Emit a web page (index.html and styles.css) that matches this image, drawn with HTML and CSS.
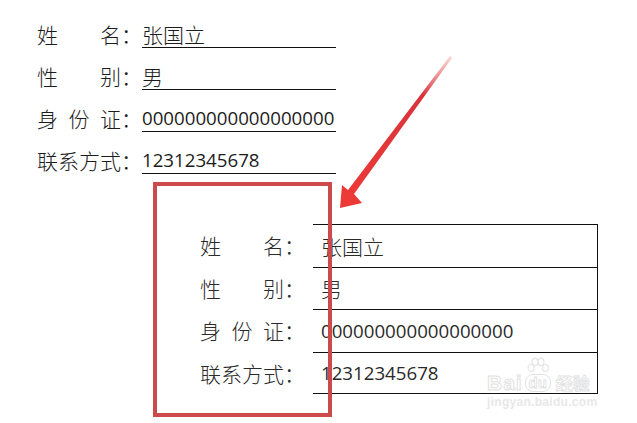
FILE: index.html
```html
<!DOCTYPE html>
<html lang="zh-CN">
<head>
<meta charset="utf-8">
<title>表单</title>
<link rel="stylesheet" href="styles.css">
</head>
<body>
<div class="page">
  <section class="form">
    <div class="row">
      <div class="label"><span class="chars"><span>姓</span><span>名</span></span><span class="colon">：</span></div>
      <div class="value cjk">张国立</div>
    </div>
    <div class="row">
      <div class="label"><span class="chars"><span>性</span><span>别</span></span><span class="colon">：</span></div>
      <div class="value cjk">男</div>
    </div>
    <div class="row">
      <div class="label"><span class="chars"><span>身</span><span>份</span><span>证</span></span><span class="colon">：</span></div>
      <div class="value num">000000000000000000</div>
    </div>
    <div class="row">
      <div class="label"><span class="chars"><span>联</span><span>系</span><span>方</span><span>式</span></span><span class="colon">：</span></div>
      <div class="value num">12312345678</div>
    </div>
  </section>

  <section class="table">
    <div class="tlabel"><span class="chars"><span>姓</span><span>名</span></span><span class="colon">：</span></div>
    <div class="tcell cjk">张国立</div>
    <div class="tlabel"><span class="chars"><span>性</span><span>别</span></span><span class="colon">：</span></div>
    <div class="tcell cjk">男</div>
    <div class="tlabel"><span class="chars"><span>身</span><span>份</span><span>证</span></span><span class="colon">：</span></div>
    <div class="tcell num">000000000000000000</div>
    <div class="tlabel"><span class="chars"><span>联</span><span>系</span><span>方</span><span>式</span></span><span class="colon">：</span></div>
    <div class="tcell num last">12312345678</div>
  </section>

  <div class="highlight"></div>

  <svg class="arrow" width="637" height="423" viewBox="0 0 637 423">
    <defs>
      <linearGradient id="ag" x1="450" y1="57" x2="340" y2="207" gradientUnits="userSpaceOnUse">
        <stop offset="0" stop-color="#f4b6b8" stop-opacity="0.6"/>
        <stop offset="0.25" stop-color="#d8343c"/>
        <stop offset="1" stop-color="#ee3a36"/>
      </linearGradient>
    </defs>
    <polygon fill="url(#ag)" points="450,56 452,58 354,194 362,203 340,208 342,185 348,190"/>
  </svg>

  <div class="watermark">
    <div class="wm-main">
      <span class="wm-bai">Bai</span>
      <span class="wm-du">
        <svg class="paw" width="24" height="20" viewBox="0 0 24 20">
          <g fill="none" stroke="#e4e4e4" stroke-width="1.2">
            <ellipse cx="5" cy="11" rx="3" ry="3.5"/>
            <ellipse cx="9" cy="5" rx="3" ry="3.6"/>
            <ellipse cx="15" cy="5" rx="3" ry="3.6"/>
            <ellipse cx="19.5" cy="11" rx="3" ry="3.5"/>
          </g>
        </svg>
        <span class="du-text">du</span>
      </span>
      <span class="wm-cn">经验</span>
    </div>
    <div class="wm-url">jingyan.baidu.com</div>
  </div>
</div>
</body>
</html>
```
FILE: styles.css
```css
html, body {
  margin: 0;
  padding: 0;
  background: #ffffff;
}

.page {
  position: relative;
  width: 637px;
  height: 423px;
  overflow: hidden;
  color: #1c1c1c;
  font-family: "Noto Sans CJK SC", "Noto Sans", sans-serif;
  font-size: 21px;
  font-weight: 300;
}

.form {
  padding: 6px 0 0 37px;
}

.row {
  display: flex;
  align-items: flex-end;
  height: 42px;
}

.label {
  display: flex;
  width: 105px;
  line-height: 26px;
  height: 27px;
}

.chars {
  display: flex;
  justify-content: space-between;
  width: 84px;
}

.colon {
  width: 21px;
}

.value {
  width: 194px;
  height: 26px;
  line-height: 26px;
  border-bottom: 1px solid #111;
  white-space: nowrap;
}

.cjk {
  font-family: "Noto Sans CJK SC", sans-serif;
}

.num {
  font-family: "Open Sans", "Noto Sans", sans-serif;
  font-size: 18.7px;
  font-weight: 400;
}

.table {
  display: grid;
  grid-template-columns: 113px 285px;
  grid-auto-rows: 42.5px;
  margin: 50px 0 0 200px;
  color: #2a2a2a;
}

.tlabel {
  display: flex;
  align-items: center;
  width: 105px;
}

.tcell {
  display: flex;
  align-items: center;
  padding-left: 8px;
  border-top: 1px solid #111;
  border-right: 1px solid #111;
  white-space: nowrap;
}

.tcell.last {
  border-bottom: 1px solid #111;
}

.highlight {
  position: absolute;
  left: 153px;
  top: 182px;
  width: 171px;
  height: 227px;
  border: 4px solid #cc4a4c;
}

.arrow {
  position: absolute;
  left: 0;
  top: 0;
  pointer-events: none;
}

.watermark {
  position: absolute;
  left: 487px;
  top: 352px;
  width: 120px;
  color: #ffffff;
  font-family: "Liberation Sans", sans-serif;
}

.wm-main {
  display: flex;
  align-items: flex-end;
  height: 40px;
}

.wm-bai {
  font-size: 21px;
  font-weight: bold;
  line-height: 18px;
  letter-spacing: 1px;
  -webkit-text-stroke: 1px #e2e2e2;
}

.wm-du {
  display: flex;
  flex-direction: column;
  align-items: center;
  margin-left: 2px;
}

.paw {
  display: block;
  margin-bottom: -3px;
}

.du-text {
  display: block;
  width: 24px;
  height: 16px;
  line-height: 15px;
  text-align: center;
  font-size: 15px;
  font-weight: bold;
  color: #ffffff;
  border: 1px solid #e2e2e2;
  border-radius: 8px;
  -webkit-text-stroke: 0.8px #e0e0e0;
}

.wm-cn {
  margin-left: 5px;
  font-family: "Noto Sans CJK SC", sans-serif;
  font-size: 17px;
  font-weight: bold;
  line-height: 18px;
  -webkit-text-stroke: 0.8px #e0e0e0;
}

.wm-url {
  margin-top: 4px;
  font-size: 12px;
  font-weight: bold;
  line-height: 12px;
  letter-spacing: 0.3px;
  color: #e8e8e8;
}
```
